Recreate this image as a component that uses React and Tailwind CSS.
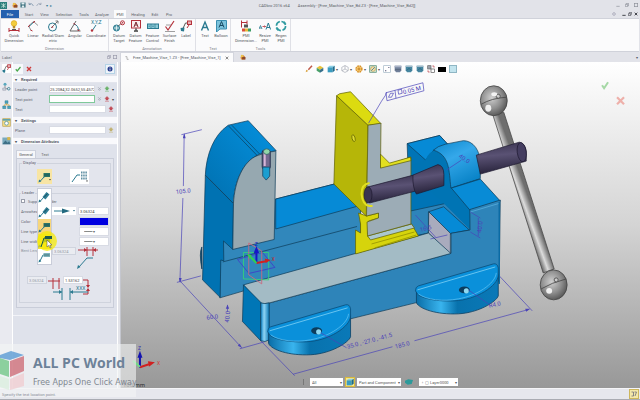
import React from 'react';

const TEAL = '#2b7a90';
const RED = '#b5303a';
const DIM = '#4a43b8';

function Icon({ size = 12, className = '', children }) {
  return (
    <svg width={size} height={size} viewBox="0 0 12 12" fill="none" strokeWidth="1" className={'shrink-0 ' + className} aria-hidden="true">
      {children}
    </svg>
  );
}

const icons = {
  quick: (
    <>
      <circle cx="6" cy="3.4" r="2.8" fill="#f2cd3c" stroke="#d9a51c" strokeWidth=".6" />
      <path d="M4.8 6h2.4v2.4H4.8z" fill="#b98d2a" />
      <path d="M1 10.5h10M1 8v4M11 8v4" stroke={RED} />
      <path d="M4 9.5h4" stroke="#555" />
    </>
  ),
  linear: (
    <>
      <path d="M1.500 6l5-4.500M1.500 6l3 5M6.500 1.500l4.500 4" stroke="#777" strokeWidth=".8" />
      <path d="M2 6.500l4.800-4.500" stroke={TEAL} />
      <path d="M1 7l2-2M6 3l2-2M3.500 10l2 1" stroke={RED} />
    </>
  ),
  radial: (
    <>
      <circle cx="5.500" cy="7" r="4" stroke={TEAL} />
      <path d="M4 8l7-7M8.500 1H11v2.500" stroke="#777" />
      <circle cx="5.500" cy="7" r=".8" fill={RED} />
    </>
  ),
  angular: (
    <>
      <path d="M1 11h10.500M1 11l6-10" stroke="#666" />
      <path d="M5 4c3 1 4.500 3 4.500 7" stroke={TEAL} />
      <path d="M4.500 3l2 2M8.500 9.500l1 1.500 1-1.500" stroke={RED} />
    </>
  ),
  target: (
    <>
      <circle cx="3.500" cy="8" r="3" fill="#5d9fae" stroke={TEAL} />
      <path d="M1 8h5M3.500 5.500v5" stroke="#fff" strokeWidth=".7" />
      <path d="M5.500 6L8 3.500" stroke="#555" />
      <circle cx="9.500" cy="2.800" r="2" stroke={RED} />
      <circle cx="9.500" cy="2.800" r=".8" fill={RED} />
    </>
  ),
  feature: (
    <>
      <rect x="1.500" y=".5" width="9" height="7.500" fill="#fbeeee" stroke={RED} />
      <path d="M4 7l2-5 2 5M4.800 5h2.500" stroke="#7c2a32" />
      <path d="M6 8v2M4 11.300h4L6 9.500z" stroke="#555" fill="#555" />
    </>
  ),
  control: (
    <>
      <rect x=".5" y="4" width="11" height="4.500" fill="#8cc9d6" stroke={TEAL} />
      <path d="M4 4v4.500M8 4v4.500M1.500 6.200h1.500M5 6.200h2" stroke={TEAL} strokeWidth=".7" />
    </>
  ),
  surface: (
    <>
      <path d="M1.500 6.500L4 10l6-9" stroke={RED} strokeWidth="1.200" />
      <path d="M2 5h5M1 11.500h10" stroke="#888" strokeWidth=".8" />
    </>
  ),
  label: (
    <>
      <path d="M2.500 9.500L5.500 3h2" stroke="#555" />
      <rect x="7.500" y="1" width="4" height="3.500" fill="#e8b0b4" stroke={RED} />
      <path d="M.5 8l4-.5-.5 4-3-.5z" fill={TEAL} />
      <path d="M7 8l2-3" stroke={RED} />
    </>
  ),
  text: <path d="M2.500 10.500L6 2l3.500 8.500M3.800 7.500h4.500" stroke={TEAL} strokeWidth="1.400" />,
  balloon: (
    <>
      <path d="M1.500.5h10V9H5l-3.500 3z" fill="#7cc3dc" stroke="#3a8fb0" />
      <path d="M4 7.500l2.500-6 2.500 6M5 5.500h3" stroke="#184b63" />
    </>
  ),
  pmi: (
    <>
      <path d="M1.500.5v7M7 .5v4M1.500 2.500h5.500" stroke={RED} />
      <rect x="4" y="4.500" width="4" height="3" fill="#555" />
      <rect x="2" y="8.500" width="3" height="3" fill="#d94f3a" />
      <rect x="5" y="8.500" width="3" height="3" fill="#e5b93a" />
      <rect x="8" y="8.500" width="3" height="3" fill="#3a9c63" />
    </>
  ),
  resize: (
    <>
      <path d="M0 9l1.500-3.500L3 9M.5 8h2" stroke={TEAL} strokeWidth=".8" />
      <path d="M3.500 6.500h3M5.500 5.500l1 1-1 1" stroke={RED} strokeWidth=".8" />
      <path d="M7 9.500l2.300-6.500 2.300 6.500M8 7.500h3" stroke={TEAL} />
    </>
  ),
  regen: (
    <>
      <circle cx="6" cy="6" r="4.600" stroke="#2f9aa0" strokeWidth="1.600" strokeDasharray="5.500 1.700" />
      <path d="M9 1l2.500 2.500-3 .5zM3 11L.5 8.500l3-.5z" fill="#2f9aa0" />
    </>
  ),
  tree: (
    <>
      <circle cx="4" cy="3" r="2" fill="#58a7bd" />
      <path d="M4 5v4h4" stroke="#777" />
      <circle cx="9" cy="9" r="1.700" stroke={TEAL} />
      <path d="M1 8h4v3H1z" fill="#cdd6e0" stroke="#889" strokeWidth=".6" />
    </>
  ),
  assembly: (
    <>
      <path d="M4 1h4v3.500H4zM1 8h4v3.500H1zM7.500 8h4v3.500h-4z" fill="#4da3bd" stroke={TEAL} strokeWidth=".6" />
      <path d="M6 4.500v2M3 8V6.500h6.500V8" stroke="#c9a23a" />
    </>
  ),
  calendar: (
    <>
      <rect x="1" y="1" width="10" height="10" fill="#f3dc85" stroke="#b99a3a" strokeWidth=".8" />
      <path d="M1 2.500h10" stroke="#4d9db4" strokeWidth="2" />
      <circle cx="6" cy="7" r="2.500" fill="#fff" stroke={TEAL} strokeWidth=".8" />
    </>
  ),
  scene: (
    <>
      <rect x=".5" y="2" width="11" height="9" fill="#7aa9bc" />
      <path d="M.5 11l4-5 3 3 2-2 2 4z" fill="#3d6f86" />
      <path d="M7 1.500h4v4H7z" fill="#d9b64b" />
    </>
  ),
  tick: <path d="M1.500 6.500l3 3.500 6.500-8" stroke="#4aa84e" strokeWidth="2.400" />,
  cross: <path d="M2 2l8 8M10 2l-8 8" stroke="#cf3a3a" strokeWidth="2.800" />,
  info: (
    <>
      <circle cx="6" cy="6" r="5" fill="#2a3e8e" />
      <path d="M6 5v4M6 2.500v1.300" stroke="#fff" strokeWidth="1.500" />
    </>
  ),
  chevrons: <path d="M3 1l3 3 3-3M3 5l3 3 3-3" stroke="#7a8090" strokeWidth="1.300" />,
  pick: <path d="M6 1l4 4H8v3H4V5H2zM2 10.500h8" fill="currentColor" stroke="currentColor" />,
  cube: (
    <>
      <path d="M1 3.500L4 1h7.500L8.500 3.500z" fill="#8ad0e6" />
      <path d="M1 3.500h7.500V11H1z" fill="#3a9cc0" />
      <path d="M8.500 3.500l3-2.500v7.500l-3 2.500z" fill="#1f6b8c" />
    </>
  ),
  wire: <path d="M6 .8l4.800 2.600v5.200L6 11.200 1.200 8.600V3.400zM6 6V1M6 6l4.500 2.500M6 6L1.500 8.500" stroke="#9aa0ab" strokeWidth=".9" />,
  brush: (
    <>
      <path d="M5 7l5.500-6" stroke="#c05a4a" strokeWidth="2.200" />
      <path d="M1 11l1-4 3 2z" fill="#d8a13a" />
    </>
  ),
  colorcube: (
    <>
      <path d="M6 1l5 3-5 3-5-3z" fill="#e9c33a" />
      <path d="M1 4l5 3v4.500L1 8.500z" fill="#4aa06a" />
      <path d="M11 4L6 7v4.500l5-3z" fill="#38718c" />
    </>
  ),
  gear: (
    <>
      <circle cx="6" cy="6" r="4.300" stroke="#d9942a" strokeWidth="2.400" strokeDasharray="2.600 .8" />
      <circle cx="6" cy="6" r="3.300" fill="#f0b850" />
      <circle cx="6" cy="6" r="1.200" fill="#a5641c" />
    </>
  ),
  compass: (
    <>
      <rect x="1" y="1" width="10" height="10" fill="#c5dfc8" stroke="#5c8f7c" />
      <circle cx="6" cy="6" r="3.500" fill="#f4e5ae" stroke="#c08a3a" strokeWidth=".8" />
      <path d="M3.500 8.500l5-5" stroke="#4a7a94" strokeWidth="1.300" />
    </>
  ),
  page: (
    <>
      <rect x="1" y="1" width="10" height="10" fill="#fff" stroke="#9fb4c4" />
      <path d="M3 8h2v1.500H3zM8 3h1.500v1.500H8z" fill="#557" />
    </>
  ),
  shield: (
    <>
      <path d="M1 1h10v7l-2 3H3L1 8z" fill="#70809a" />
      <path d="M1 1h10v2.500H1z" fill="#aab4c8" />
      <path d="M1.500 7h9" stroke="#4d5a70" />
    </>
  ),
  shieldBlue: (
    <>
      <path d="M1 1h10v7l-2 3H3L1 8z" fill="#4686a0" />
      <path d="M1 1h10v2H1z" fill="#a5bccb" />
      <path d="M3 8l3-3 3 3" stroke="#1f566e" />
    </>
  ),
  swap: (
    <>
      <rect x="1" y="1" width="5" height="5" fill="#9aa0aa" stroke="#666" />
      <rect x="6" y="6" width="5" height="5" fill="#fff" stroke="#555" />
      <path d="M8 1.500h2.500V4M1.500 8v2.500H4" stroke={RED} />
    </>
  ),
  folder: (
    <>
      <path d="M1 6l5-4 4 3v6H2z" fill="#d98c3a" />
      <path d="M4 6h7v5H4z" fill="#8e4a2a" />
      <circle cx="4" cy="4" r="2.500" fill="#ecc24c" />
    </>
  ),
  save: (
    <>
      <path d="M1 1h10v10H1z" fill="#2d6473" />
      <path d="M3 1h6v4H3zM3.500 7h5v4h-5z" fill="#e3edf1" />
    </>
  ),
  logo: (
    <>
      <rect width="12" height="12" fill="#2c7f7c" />
      <path d="M2 3l4 3 4-3M2 9l4-3 4 3M6 2v8" stroke="#d9f0e6" strokeWidth="1.200" />
    </>
  ),
  undo: <path d="M2 5c3-3 7-2 8.500 3M2 1.500V5h3.500" stroke="#6b86a0" strokeWidth="1.400" />,
  redo: <path d="M10 5C7 2 3 3 1.500 8M10 1.500V5H6.500" stroke="#8c9aac" strokeWidth="1.400" />,
};

function Leader({ table, slant, arrow }) {
  return (
    <svg width="13" height="12" viewBox="0 0 13 12" fill="none" aria-hidden="true">
      {slant ? (
        <>
          <path d="M1.500 11L6 6" stroke={TEAL} />
          <path d="M4.500 6l4-5 3 2.500-4 5z" fill="#2f7f96" />
          <path d="M6 6.500l3.500-4" stroke="#123e4c" strokeWidth=".7" />
        </>
      ) : (
        <>
          <path d={table ? 'M1.500 11L5 4h2' : 'M1.500 11L6 6 8 5'} stroke={TEAL} />
          <rect x="5.500" y="2" width="6.500" height="4" fill={table ? '#7fb3bd' : '#2c7468'} />
          <path d="M6 4h5.500" stroke="#164b4a" strokeWidth=".6" />
        </>
      )}
      <path d="M.5 11.500l.6-3 2.200 1.800z" fill={TEAL} />
      {arrow && <path d="M11 8h2l-1 1.500z" fill="#444" />}
    </svg>
  );
}

const ribbon = [
  {
    name: 'Dimension',
    pad: 'pl-[3px] pr-0.5',
    items: [
      ['quick', 'Quick Dimension', 'w-5'],
      ['linear', 'Linear', 'w-[18px]'],
      ['radial', 'Radial/Diam etric', 'w-[22px]'],
      ['angular', 'Angular', 'w-[22px]'],
      ['xyz', 'Coordinate', 'w-5'],
    ],
  },
  {
    name: 'Annotation',
    pad: 'pl-0.5 pr-px',
    items: [
      ['target', 'Datum Target', 'w-4'],
      ['feature', 'Datum Feature', 'w-[17px]'],
      ['control', 'Feature Control', 'w-[17px]'],
      ['surface', 'Surface Finish', 'w-[17px]'],
      ['label', 'Label', 'w-4'],
    ],
  },
  { name: 'Text', pad: 'px-px', items: [['text', 'Text', 'w-4'], ['balloon', 'Balloon', 'w-4']] },
  {
    name: 'Tools',
    pad: 'pl-1 pr-px',
    items: [['pmi', 'PMI Dimension...', 'w-[22px]'], ['resize', 'Resize PMI', 'w-4'], ['regen', 'Regen PMI', 'w-4']],
  },
];

const tabs = [
  ['Start', 'w-5'],
  ['View', 'w-[11px]'],
  ['Selection', 'w-7'],
  ['Tools', 'w-3'],
  ['Analyze', 'w-6'],
  ['PMI', 'w-3 bg-[#fbfbfc]'],
  ['Healing', 'w-6'],
  ['Edit', 'w-[10px]'],
  ['Pro', 'w-[18px]'],
];

function TitleBar() {
  return (
    <header className="flex h-[10px] items-center pr-0.5">
      <div className="flex flex-1 items-center gap-0.5 pr-9">
        <Icon size={7}>{icons.logo}</Icon>
        {['folder', 'save', 'undo', 'redo'].map((n) => (
          <button key={n} aria-label={n} className={n === 'folder' ? 'ml-[3px]' : ''}>
            <Icon size={6}>{icons[n]}</Icon>
          </button>
        ))}
        <button aria-label="Previous" className="ml-0.5 text-[#3b7c94]">▾</button>
        <button aria-label="Next" className="text-[#3b7c94]">▸</button>
      </div>
      <h1 className="flex gap-2 text-[#5b5f67]">
        <span>CADbro 2016 x64</span>
        <span>Assembly - [Free_Machine_Vise_Bd.Z3 - [Free_Machine_Vise_Bd2]]</span>
      </h1>
      <div className="flex flex-1 justify-end gap-[5px] text-[#8c8f98]">
        <button aria-label="Minimize"><Icon size={4}><path d="M1 10h10" stroke="currentColor" strokeWidth="2" /></Icon></button>
        <button aria-label="Restore"><Icon size={4}><path d="M1 4h7v7H1zM4 4V1h7v7H8" stroke="currentColor" strokeWidth="2" /></Icon></button>
        <button aria-label="Close"><Icon size={4}><rect x="1" y="1" width="10" height="10" stroke="currentColor" strokeWidth="2" /></Icon></button>
      </div>
    </header>
  );
}

function Ribbon() {
  return (
    <>
      <nav className="flex h-2 items-stretch pl-px pr-0.5 text-[#5b5f67]">
        <button className="w-[18px] bg-[#2560ae] text-white">File</button>
        {tabs.map(([t, w]) => (
          <button key={t} className={w + ' whitespace-nowrap'}>{t}</button>
        ))}
        <div className="ml-auto flex items-center gap-0.5 text-[#44464e]">
          <Icon size={4}><circle cx="6" cy="6" r="4" stroke="#99a" strokeWidth="2" /></Icon>
          <Icon size={4} className="ml-1"><path d="M1 10h10" stroke="currentColor" strokeWidth="3" /></Icon>
          <Icon size={4}><path d="M1 5h7v6H1zM4 4V1h7v7" stroke="currentColor" strokeWidth="2" /></Icon>
          <Icon size={4}><path d="M2 2l8 8M10 2l-8 8" stroke="currentColor" strokeWidth="3" /></Icon>
        </div>
      </nav>
      <section className="mx-px flex h-[34px] border-y border-[#d0d2da] bg-[#fbfbfc] text-[#555861]">
        {ribbon.map((g) => (
          <div key={g.name} className="flex flex-col justify-between border-r border-[#dfe0e6]">
            <div className={'flex pt-px ' + g.pad}>
              {g.items.map(([icon, label, w]) => (
                <button key={label} className={'flex flex-col items-center gap-px ' + w}>
                  {icon === 'xyz' ? (
                    <svg width="12" height="12" viewBox="0 0 12 12" fill="none" className="overflow-visible" aria-hidden="true">
                      <text x="1" y="4" fontSize="5" fill={TEAL}>X,Y,Z</text>
                      <path d="M2 11l4-6" stroke={TEAL} />
                      <circle cx="2" cy="10.500" r="1.200" fill={RED} />
                    </svg>
                  ) : (
                    <Icon>{icons[icon]}</Icon>
                  )}
                  <span>{label}</span>
                </button>
              ))}
            </div>
            <div className="text-center text-[#7c7f89]">{g.name}</div>
          </div>
        ))}
      </section>
    </>
  );
}

function Section({ title, children }) {
  return (
    <section>
      <h2 className="flex h-2 items-center gap-1 border-y border-[#e3e5ed] bg-[#f9f9fc] pl-0.5 font-bold text-[#555a66]">
        <span aria-hidden="true">▾</span>
        {title}
      </h2>
      <div className="py-px">{children}</div>
    </section>
  );
}

function Field({ id, label, value = '', active, children }) {
  return (
    <div className="flex h-[10px] items-center pl-0.5 pr-[3px]">
      <label htmlFor={id} className="w-[34px] shrink-0 text-[#5e626e]">{label}</label>
      <input
        id={id}
        defaultValue={value}
        className={'h-2 min-w-0 flex-1 border bg-white text-[#444] ' + (active ? 'border-[#7fc99a]' : 'border-[#d8dbe4]')}
      />
      {children}
    </div>
  );
}

function RowIcons({ color }) {
  return (
    <div className="flex w-[19px] shrink-0 items-center justify-between pl-0.5">
      <Icon size={5}>{icons.chevrons}</Icon>
      <Icon size={6} className={color}>{icons.pick}</Icon>
      <span className="text-[#444]">▾</span>
    </div>
  );
}

const menu = ['slant', 'slant', 'plain', 'plain', 'table'];

function LabelPanel() {
  return (
    <aside className="flex w-[120px] shrink-0 flex-col">
      <div className="flex h-[10px] items-center justify-between pl-0.5 pr-[3px] text-[#666a76]">
        Label
        <div className="flex gap-0.5">
          <Icon size={4}><path d="M1 4h7v7H1zM4 4V1h7v7H8" stroke="#99a" strokeWidth="2" /></Icon>
          <Icon size={4}><rect x="1" y="1" width="10" height="10" stroke="#99a" strokeWidth="2" /></Icon>
        </div>
      </div>
      <div className="flex flex-1">
        <div className="flex w-3 shrink-0 flex-col items-center gap-[9px] bg-[#e9eaf0] pt-0.5">
          {['label', 'tree', 'assembly', 'calendar', 'scene'].map((n) => (
            <button key={n} aria-label={n} className={n === 'label' ? 'bg-white' : ''}>
              <Icon size={9}>{icons[n]}</Icon>
            </button>
          ))}
        </div>
        <div className="mr-0.5 min-w-0 flex-1 border-x border-white bg-[#dfe2eb]">
          <div className="flex h-[13px] items-center gap-px">
            <button aria-label="OK" className="flex h-[10px] w-[10px] items-center justify-center bg-[#f6f8fb]"><Icon size={6}>{icons.tick}</Icon></button>
            <button aria-label="Cancel" className="flex h-[10px] w-[10px] items-center justify-center"><Icon size={6}>{icons.cross}</Icon></button>
            <button aria-label="Help" className="ml-auto mr-0.5 border border-[#b5d3e6] bg-[#eef4fa] p-px"><Icon size={6}>{icons.info}</Icon></button>
          </div>
          <div className="flex flex-col gap-px">
            <Section title="Required">
              <Field id="lp" label="Leader point" value="25.2084,32.0652,55.4572"><RowIcons color="text-[#6ab36a]" /></Field>
              <Field id="tp" label="Text point" active><RowIcons color="text-[#c24a56]" /></Field>
              <Field id="tx" label="Text"><Icon size={6} className="ml-0.5 text-[#c24a56]">{icons.pick}</Icon></Field>
            </Section>
            <Section title="Settings">
              <Field id="pl" label="Plane"><Icon size={6} className="ml-0.5 text-[#c0b070]">{icons.pick}</Icon></Field>
            </Section>
            <Section title="Dimension Attributes">
              <div className="px-[3px] pt-1">
                <div className="flex h-2" role="tablist">
                  <button role="tab" aria-selected="true" className="w-5 border border-b-0 border-[#cdd1dc] bg-[#f6f7fa] text-[#555]">General</button>
                  <button role="tab" aria-selected="false" className="w-[18px] text-[#666]">Text</button>
                </div>
                <div className="flex flex-col gap-[3px] border border-[#c9cdd9] bg-[#e3e5ed] px-0.5 pb-1 pt-px text-[#5e626e]">
                  <fieldset className="relative min-w-0 border border-[#cfd3dd] pb-0.5 pl-[17px]">
                    <legend className="-ml-[15px] px-px leading-[6px]">Display</legend>
                    <div className="flex gap-[18px] pt-[3px]">
                      <button aria-label="Leader style" className="flex h-[15px] w-[15px] items-center justify-center bg-[#f8e5a4]"><Leader arrow /></button>
                      <button aria-label="Table style" className="flex h-[15px] w-[19px] items-center justify-center bg-white">
                        <svg width="17" height="12" viewBox="0 0 17 12" fill="none" aria-hidden="true">
                          <path d="M1 11l5-7h3" stroke={TEAL} />
                          <path d="M10 1.500h6M10 4.500h6M10 7.500h6" stroke="#5f8fa3" strokeWidth="2" strokeDasharray="1.500 .7" />
                          <path d="M15 9.500h2l-1 1.500z" fill="#444" />
                        </svg>
                      </button>
                    </div>
                    <div role="menu" className="absolute left-[17px] top-[22px] z-10 flex w-[15px] flex-col border border-[#c9cdd9] bg-white">
                      {menu.map((m, i) => (
                        <button key={i} role="menuitem" aria-label={'Leader layout ' + (i + 1)} className={'flex h-[15px] items-center justify-center ' + (i === 2 ? 'bg-[#f6d67c]' : i === 3 ? 'bg-[#f6e23a]' : 'bg-white')}>
                          <Leader slant={m === 'slant'} table={m === 'table'} />
                        </button>
                      ))}
                      <svg width="22" height="22" viewBox="0 0 22 22" className="absolute -left-0.5 top-[41px] max-w-none" aria-hidden="true">
                        <circle cx="11" cy="11" r="10" fill="#f5ea00" opacity=".72" />
                        <path d="M5 17L8 8h7" fill="none" stroke="#1e5a4c" />
                        <path d="M9 6h7v3H9z" fill="#1e5a4c" />
                        <path d="M11 10v7l1.800-1.500 1.200 2.500 1-.5-1.200-2.500h2.200z" fill="#fff" stroke="#444" strokeWidth=".5" />
                      </svg>
                    </div>
                  </fieldset>
                  <fieldset className="min-w-0 border border-[#cfd3dd] px-px pb-px">
                    <legend className="px-px leading-[6px]">Leader</legend>
                    <label className="flex h-[10px] items-center gap-[3px]">
                      <input type="checkbox" className="size-1 appearance-none border border-[#9a9eab] bg-white" />
                      Suppress leader
                    </label>
                    <div className="flex h-[10px] items-center">
                      <label htmlFor="ar" className="w-[31px] shrink-0">Arrowhead</label>
                      <span className="flex h-2 w-6 shrink-0 items-center justify-end bg-white">
                        <svg width="22" height="6" viewBox="0 0 22 6" aria-hidden="true">
                          <path d="M0 3h9" stroke={TEAL} />
                          <path d="M8 .5L16 3 8 5.500zM19 2h2l-1 1.500z" fill="#236a80" />
                        </svg>
                      </span>
                      <input id="ar" defaultValue="3.06324" className="ml-0.5 h-2 min-w-0 flex-1 border border-[#d8dbe4] bg-white px-px text-[#444]" />
                    </div>
                    <div className="flex h-[10px] items-center justify-between">
                      Color
                      <button aria-label="Color" className="h-[9px] w-[30px] border border-[#d8dbe4] bg-[#0000e0]" />
                    </div>
                    {['Line type', 'Line width'].map((t) => (
                      <div key={t} className="flex h-[10px] items-center justify-between">
                        <label htmlFor={t}>{t}</label>
                        <select id={t} className="h-[9px] w-[30px] appearance-none border border-[#d8dbe4] bg-white px-1 text-[#666]">
                          <option>━━━━ ▾</option>
                        </select>
                      </div>
                    ))}
                    <div className="flex items-start">
                      <label htmlFor="bl" className="w-[31px] shrink-0 whitespace-nowrap leading-[10px] text-[#8f93a0]">Bent Length</label>
                      <input id="bl" disabled defaultValue="3.06324" className="mt-px h-2 w-6 border border-[#d0d4de] bg-[#eaecf1] px-px text-[#9599a5]" />
                      <svg width="26" height="24" viewBox="0 0 26 24" fill="none" aria-hidden="true">
                        <path d="M2 4h20M11 1v9M17 1v9" stroke={RED} />
                        <path d="M8 2l3 2-3 2zM20 2l-3 2 3 2z" fill={RED} />
                        <path d="M17 12h-6L3 21" stroke={TEAL} />
                        <path d="M1 23l1-4 2.500 2z" fill={TEAL} />
                      </svg>
                    </div>
                    <div className="grid">
                      <svg width="74" height="31" viewBox="0 0 74 31" fill="none" className="[grid-area:1/1]" aria-hidden="true">
                        <path d="M27 11h12M32 8v11M38 8v11" stroke={RED} />
                        <path d="M62 10h5v6M62 24h5v-4" stroke={RED} />
                        <path d="M65 15h4l-2 3zM65 21h4l-2-3z" fill={RED} />
                        <path d="M32 22h9M41 18v12M49 18v12M49 22h18" stroke={TEAL} />
                        <text x="55" y="20" fontSize="5" fill={TEAL}>XXX</text>
                        <path d="M38 20l3 2-3 2zM52 20l-3 2 3 2z" fill={TEAL} />
                      </svg>
                      <div className="flex gap-4 pl-[6px] pt-[6px] [grid-area:1/1]">
                        <input aria-label="Gap" disabled defaultValue="3.06324" className="h-2 w-5 border border-[#d0d4de] bg-[#eaecf1] px-px text-[#9599a5]" />
                        <input aria-label="Offset" defaultValue="1.53162" className="h-2 w-5 border border-[#d8dbe4] bg-white px-px text-[#444]" />
                      </div>
                    </div>
                  </fieldset>
                </div>
              </div>
            </Section>
          </div>
          <div className="mt-[6px] border-t border-[#f2f3f8]" />
        </div>
      </div>
    </aside>
  );
}

function Foot({ x, y }) {
  return (
    <g transform={`translate(${x} ${y})`}>
      <path d="M0 0L78-25l4 8v21C80 10 62 21 42 22 20 23 3 17 0 11z" fill="url(#footSide)" stroke="#0a4064" strokeWidth=".8" />
      <path d="M-1-1q0-4 3-5L77-28q4-1 5 4v7c0 11-22 25-44 26C16 10 3 5 1 2z" fill="#0a90da" stroke="#0a4d78" strokeWidth=".8" />
      <path d="M1-2L79-25" stroke="#7fd0f5" strokeWidth=".8" />
      <path d="M2 2c8 6 25 8 40 5C60 4 79-8 80-19" fill="none" stroke="#58bdf0" strokeWidth=".8" />
      <ellipse cx="48" cy="-2" rx="5.500" ry="3.500" fill="#0b3c5d" />
      <ellipse cx="50" cy="-1" rx="2.500" ry="2.600" fill="#8fd8f0" />
    </g>
  );
}

function Model() {
  const e = { stroke: '#0d3b58', strokeWidth: 0.7, strokeLinejoin: 'round' };
  return (
    <svg viewBox="120 62 520 326" className="absolute inset-0 h-full w-full" fontFamily="Roboto, sans-serif" role="img" aria-label="Machine vise assembly">
      <defs>
        <linearGradient id="jaw" x1="0" y1="1" x2="1" y2="0">
          <stop offset="0" stopColor="#006fae" />
          <stop offset="1" stopColor="#0592e0" />
        </linearGradient>
        <linearGradient id="footSide">
          <stop offset="0" stopColor="#0a6ea8" />
          <stop offset=".3" stopColor="#39b4ee" />
          <stop offset=".5" stopColor="#0872ad" />
          <stop offset="1" stopColor="#0a79b8" />
        </linearGradient>
        <linearGradient id="corner">
          <stop offset="0" stopColor="#0a7fc4" />
          <stop offset=".4" stopColor="#8fd4f4" />
          <stop offset="1" stopColor="#0a76b4" />
        </linearGradient>
        <linearGradient id="bearing" x1="0" y1="0" x2=".5" y2="1">
          <stop offset="0" stopColor="#0a86cc" />
          <stop offset=".45" stopColor="#35a8ea" />
          <stop offset="1" stopColor="#0a84c8" />
        </linearGradient>
        <linearGradient id="screw" x1=".4" y1="0" x2=".55" y2="1">
          <stop offset="0" stopColor="#3a3450" />
          <stop offset=".4" stopColor="#5a5274" />
          <stop offset="1" stopColor="#231f36" />
        </linearGradient>
        <linearGradient id="rod" gradientUnits="userSpaceOnUse" x1="511" y1="184" x2="522" y2="180">
          <stop offset="0" stopColor="#6c6c6c" />
          <stop offset=".45" stopColor="#dcdcdc" />
          <stop offset="1" stopColor="#6e6e6e" />
        </linearGradient>
        <radialGradient id="ball" cx=".42" cy=".4" r=".62">
          <stop offset="0" stopColor="#cfcfcf" />
          <stop offset=".6" stopColor="#8e8e8e" />
          <stop offset="1" stopColor="#585858" />
        </radialGradient>
      </defs>

      <path d="M176 282.500l24-6.500M180.500 134.500l20.500-5M183.300 134L182.500 186M182 198l-3 84M180 282l61 66M239 349l25-7M260 341l34 35M292.500 374.500L392 347M414 341l115-31.500M499 276l33 35M226.700 305v7" stroke={DIM} strokeWidth=".7" fill="none" />
      <path d="M182 138l1.400-5 1.400 5zM178 278l1.200 5 1.600-5zM237 346l4 2-2-4zM525 309l5 0-4 3zM225 309l1.700-4 1.700 4z" fill={DIM} />

      <g {...e}>
        <path d="M201 247q-3 6 0 22z" fill="#07466e" />
        <path d="M275 199l58.500-15L360 206v48L243 291l-24 7V241z" fill="#3187bb" />
        <path d="M275 199l58.500-15 24 22L275 229z" fill="#068ad6" />
        <path d="M222 262l134.500-35.500" fill="none" />
        <path d="M204.500 175l28.200 28.500-.7 46-9.300-8.500.3 20-3-1-.7 37.500L201.700 280z" fill="#0072b2" />
        <path d="M204.500 175c1-20 8-40 23-50l20-4.500 28 30-14 2.500c-18 6-28 26-28.800 50.500z" fill="url(#jaw)" />
        <path d="M227.500 125.500L257 156M231 125l28 29" fill="none" />
        <path d="M232.700 203.500c1-22 10-43 24-48q8-4 18.500-4.500l-1.700 88.500L232 249.500z" fill="#96a8b0" />
      </g>
      <rect x="261.500" y="150" width="8" height="19" rx="2" fill="#74698f" stroke="#232e4c" strokeWidth="1" />
      <path d="M264 153v13" stroke="#d8b5d8" strokeWidth="2" />
      <path d="M262 167h7v9l-3.500 4-3.500-4z" fill="#1b9ed0" stroke="#164665" strokeWidth=".8" />
      <ellipse cx="266" cy="151.500" rx="3.300" ry="2.800" fill="#91d6a8" stroke="#356" strokeWidth=".8" />

      <g {...e}>
        <path d="M406.700 143.500l32.600-8.200L499 201l-30 29-19 4-22-1-18 6z" fill="#0074b6" />
        <path d="M410 211l37-8 25 27-22 4-22-22v21l-18 4z" fill="#2e84b9" />
        <path d="M406.700 143.500l32.600-8.200 8 8.700-14 6-8 10z" fill="#068ad6" />
        <path d="M428.300 211.700l15-5L469 230l-19 3.500z" fill="#068ad6" />
        <path d="M428.300 211.700l21.700 21.600v21L428 233z" fill="#a9abbd" />
        <path d="M411 165l14-5q3-9 13-11.500 9 2 9.500 14l3 25.500L469.500 210l.5 20-25-25-34-32z" fill="#0074b4" stroke="none" />
        <path d="M433 150q4-4 12-6l18-3.500c10 0 17 10 17 23v15l-29.500 9.500c-2-18-1-33-17.500-38z" fill="url(#bearing)" />
        <path d="M451 188l29-9 20 22-30.500 9z" fill="#088bd6" />
        <path d="M469.500 209.500L500 200l-1 81-84 22-65 16-82 24V303.300l182.700-50v-20l19-3.300z" fill="#2e84b9" />
        <path d="M470 212l30-9" stroke="#5bb4e4" />
        <path d="M499 202v82" stroke="#0b6ba4" strokeWidth="1.500" />
      </g>

      <g {...e}>
        <path d="M242.700 285L428 233l22.500 20.500L268 303.300q-5 1-9 0z" fill="#a3bbc5" />
        <path d="M242.700 285l17.300 17.500V341l-18.300-19.300z" fill="#0076b6" />
        <path d="M260 303q4 1.500 8.500 0V340q-4 3-8.500 1z" fill="url(#corner)" />
      </g>

      <g stroke="#5d5f00" strokeWidth=".7" strokeLinejoin="round">
        <path d="M355 254v-24l5 3v-9l-2-11 8 3 12-3v5l-10 3-1 13 44-10 7 12z" fill="#d6d40c" />
        <path d="M367 236l44-12 3 4-44 12z" fill="#abc7cf" />
        <path d="M371 244l43-12M374 248l42-13" stroke="#8a8800" />
        <path d="M336 95.500L367.500 125l-1.800 91-32.400-32z" fill="#b6b608" />
        <path d="M336 95.500l3-2 11-2 30.500 32-13 1.500z" fill="#dcdb10" />
        <path d="M367.500 125l13-2-.5 44 30.500-10v67L367 236l-.5-14 11.500-4v-5l-12 3z" fill="#9cacb6" />
        <path d="M380 154l9 9 21-6 .5 3.500L380 168z" fill="#e2e020" />
        <path d="M369 183q-8 1-8 11 1 11 8 12h3" fill="none" stroke="#e2e020" strokeWidth="2" />
        <ellipse cx="353" cy="138" rx="1.500" ry="3.500" fill="#dfdd30" transform="rotate(-15 353 138)" />
      </g>

      <g stroke="#1d1930" strokeWidth=".7">
        <path d="M367 187l46-12 2 16-46 12z" fill="url(#screw)" />
        <ellipse cx="367.500" cy="194.800" rx="4" ry="8" fill="#3a3450" />
        <path d="M412.500 175l25-10.500q6 1 6 10v11L416 194q-4-6-3.500-19z" fill="url(#screw)" />
      </g>
      <path d="M492.700 115L543 273l11-4-50.500-157z" fill="url(#rod)" stroke="#4a4a4a" strokeWidth=".8" />
      <g stroke="#1d1930" strokeWidth=".7">
        <path d="M476 155l43-13q6 1 7 9v10L480 174z" fill="url(#screw)" />
        <ellipse cx="521.500" cy="152" rx="4.500" ry="9.700" fill="#443d60" transform="rotate(-8 521.500 152)" />
      </g>
      <g stroke="#444" strokeWidth=".8">
        <ellipse cx="493.500" cy="100.500" rx="13.500" ry="15" fill="url(#ball)" />
        <ellipse cx="553.500" cy="285" rx="13.500" ry="15" fill="url(#ball)" />
        <path d="M481 104q10-6 25-7M541 289q10-6 25-10" fill="none" />
        <circle cx="498" cy="96" r="2" fill="#ccc" />
        <circle cx="556" cy="280" r="2" fill="#ccc" />
      </g>
      <g fill="#fff" opacity=".85">
        <ellipse cx="494" cy="94" rx="3" ry="2" />
        <ellipse cx="488" cy="108" rx="3" ry="3.500" />
        <ellipse cx="549" cy="291" rx="3" ry="3" />
      </g>

      <Foot x={268} y={333} />
      <Foot x={416} y={292} />

      <g stroke={DIM} strokeWidth=".7" fill="none">
        <path d="M368 123l13-22 4-6 1-3" />
        <path d="M385.500 92.500l37-10 1 8-37 10zM394.500 90l1 8" />
        <path d="M388 97l2-4h3l-2 4zM397.500 90l3.500-1 .7 4-3.500 1z" />
        <path d="M320 333l26 15M468 290l20 14M446 170l15-10" />
        <path d="M415 215l20 22M430 239l17-4M470 212l10 6M478 218v18M470 232l10 6" />
      </g>
      <g fill={DIM} fontSize="6">
        <text x="175" y="194" transform="rotate(-6 175 194)">105.0</text>
        <text x="206" y="320" transform="rotate(-8 206 320)">60.0</text>
        <text x="228" y="323" transform="rotate(-84 228 323)">40.0</text>
        <text x="347" y="349" transform="rotate(-15 347 349)">35.0 , -27.0 , -41.5</text>
        <text x="395" y="349" transform="rotate(-15 395 349)">185.0</text>
        <text x="489" y="308" transform="rotate(-12 489 308)">R4.0</text>
        <text x="403" y="94" transform="rotate(-14 403 94)">0.05 M</text>
        <text x="458" y="157" transform="rotate(35 458 157)">40.0</text>
        <text x="420" y="232" transform="rotate(-15 420 232)">16.5</text>
        <text x="481" y="233" transform="rotate(-84 481 233)">40.0</text>
      </g>

      <g fill="none" strokeWidth=".9">
        <path d="M242.700 252.500H268V280l-25.300-1z" stroke="#35d07a" />
        <path d="M236.700 259.500l25-7 12.500 15-26 6z" stroke="#4040c8" />
        <path d="M248 243l13 8v33l-13-9z" stroke="#c86a80" />
        <path d="M255.700 263v-12" stroke="#1616c8" strokeWidth="2" />
        <path d="M255.700 263l11-2" stroke="#d02020" strokeWidth="2" />
        <path d="M255.700 263l-6-6" stroke="#30d050" strokeWidth="2" />
      </g>
      <path d="M253 253l2.700-7 2.700 7z" fill="#1616c8" />
      <path d="M264 258.500l6 1.500-5 3z" fill="#d02020" />
      <path d="M246 254l5 1-2 4z" fill="#30d050" />
      <text x="254" y="246" fontSize="5" fill="#1616c8">Z</text>
      <text x="271" y="261" fontSize="5" fill="#d02020">X</text>

      <path d="M139 368v-11" stroke="#1414b0" strokeWidth="2" />
      <path d="M136.500 358l2.500-7 2.500 7z" fill="#1414b0" />
      <path d="M139 367.500l9-3" stroke="#d02020" strokeWidth="2" />
      <path d="M147 361.500l7 1-6 4.500z" fill="#d02020" />
      <path d="M139 367l-7-6" stroke="#6fdc86" strokeWidth="2" />
      <text x="137" y="350" fontSize="5" fill="#3a3ab0">Z</text>
      <text x="156" y="365" fontSize="5" fill="#d04040">X</text>
      <text x="122" y="387" fontSize="6" fill="#333">100 mm</text>
      <path d="M602 85l2 3 4-6" stroke="#a5d8a5" strokeWidth="2" fill="none" />
      <path d="M617 97l7 7M624 97l-7 7" stroke="#eeb0aa" strokeWidth="2.200" />
    </svg>
  );
}

const viewTools = [
  ['brush', false], ['colorcube', false], ['cube', true], ['wire', true], ['gear', true], ['compass', true],
  ['page', false], ['shield', false], ['shieldBlue', false], ['shieldBlue', false], ['swap', false],
];

function Picker({ label, width, children }) {
  return (
    <span className="flex items-center bg-white pr-px text-[#555]">
      <select aria-label={label} className={'h-2 appearance-none bg-white px-0.5 ' + width}>
        <option>{children}</option>
      </select>
      <span aria-hidden="true">▾</span>
    </span>
  );
}

function Viewport() {
  return (
    <main className="flex min-w-0 flex-1 flex-col">
      <div className="flex h-[10px] items-center gap-1.5 text-[#555a66]">
        <div className="flex h-full items-center gap-1 border border-b-0 border-[#d3d5dd] bg-[#fbfbfc] px-1">
          <Icon size={4}><path d="M1 2h5v8h5" stroke="#777" strokeWidth="1.500" /></Icon>
          <span className="whitespace-nowrap">Free_Machine_Vise_1.Z3 - [Free_Machine_Vise_1]</span>
          <button aria-label="Close tab"><Icon size={4}><path d="M2 2l8 8M10 2l-8 8" stroke="#555" strokeWidth="2" /></Icon></button>
        </div>
        <button aria-label="Open file"><Icon size={6}>{icons.folder}</Icon></button>
        <span className="ml-auto pr-0.5">▾</span>
      </div>
      <div className="relative flex flex-1 flex-col justify-between border-l border-[#c4c6ce] bg-linear-to-b from-white via-[#d4d4d4] to-[#989898]">
        <Model />
        <div className="relative flex h-[14px] items-center justify-center gap-[3px]">
          {viewTools.map(([n, drop], i) => (
            <button key={i} aria-label={n} className="flex items-center gap-px">
              <Icon size={8}>{icons[n]}</Icon>
              {drop && <span className="text-[#555]">▾</span>}
            </button>
          ))}
          <button aria-label="Black" className="h-[5px] w-2 bg-black" />
          <button aria-label="Light blue" className="size-2 border border-[#8fb6c4] bg-[#c2e4ee]" />
        </div>
        <div className="relative flex h-3 items-center justify-center gap-0.5">
          <span className="mr-1 h-1.5 w-px bg-[#777]" />
          <Picker label="Filter" width="w-[30px]">All</Picker>
          <button aria-label="Pick mode" className="border border-[#d9b93a] bg-[#f7e68c]"><Icon size={8}>{icons.cube}</Icon></button>
          <Picker label="Entity type" width="w-[41px]">Part and Component</Picker>
          <button aria-label="Layers" className="ml-0.5 mr-1"><Icon size={8}><path d="M0 4l5-2 7 1-2 6-6 1-4-3z" fill="#2c9a9a" /></Icon></button>
          <Picker label="Layer" width="w-9">♀ ▢ Layer0000</Picker>
        </div>
      </div>
    </main>
  );
}

function Watermark() {
  return (
    <div className="absolute bottom-[3px] left-0 z-20 flex h-[53px] w-[136px] items-center bg-[#f4f5f5]/60">
      <svg width="25" height="42" viewBox="0 0 25 42" className="shrink-0 opacity-80" aria-hidden="true">
        <path d="M0 5l11-4 13 4-14 5-10-2z" fill="#5b9bd5" />
        <path d="M0 8l9 3v16l-9-3z" fill="#74c98a" />
        <path d="M10 11l14-5v15l-14 6z" fill="#cf6f7a" />
        <path d="M0 26l9 3v11l-9-3z" fill="#dcefe0" />
        <path d="M10 29l14-6v13l-14 4z" fill="#f0cfd3" />
      </svg>
      <div className="whitespace-nowrap pl-2 pt-1">
        <div className="font-['Open_Sans',sans-serif] text-[14px] font-bold leading-5 text-[#6d8299]">ALL PC World</div>
        <div className="font-['DejaVu_Sans',sans-serif] text-[8px] leading-5 text-[#7f8790]">Free Apps One Click Away</div>
      </div>
    </div>
  );
}

export default function App() {
  return (
    <div className="relative flex h-screen min-h-[400px] flex-col overflow-hidden bg-[#e2e3e9] font-[Roboto,'Noto_Sans',sans-serif] text-[4px] leading-[5px]">
      <TitleBar />
      <Ribbon />
      <div className="flex min-h-0 flex-1">
        <LabelPanel />
        <Viewport />
      </div>
      <footer className="flex h-3 items-center justify-between border-b border-t border-b-[#a9abb2] border-t-[#f5f5f8] bg-[#e6e7ed] pl-0.5 text-[#888c96]">
        <span className="relative z-30">Specify the text location point.</span>
        <button aria-label="Output" className="mr-px border border-[#cdb65c] bg-[#f4e7a8] p-px"><Icon size={6}><path d="M1 2h4v8H1M7 2h4l-3 8" stroke="#667" strokeWidth="1.500" /></Icon></button>
      </footer>
      <Watermark />
    </div>
  );
}
